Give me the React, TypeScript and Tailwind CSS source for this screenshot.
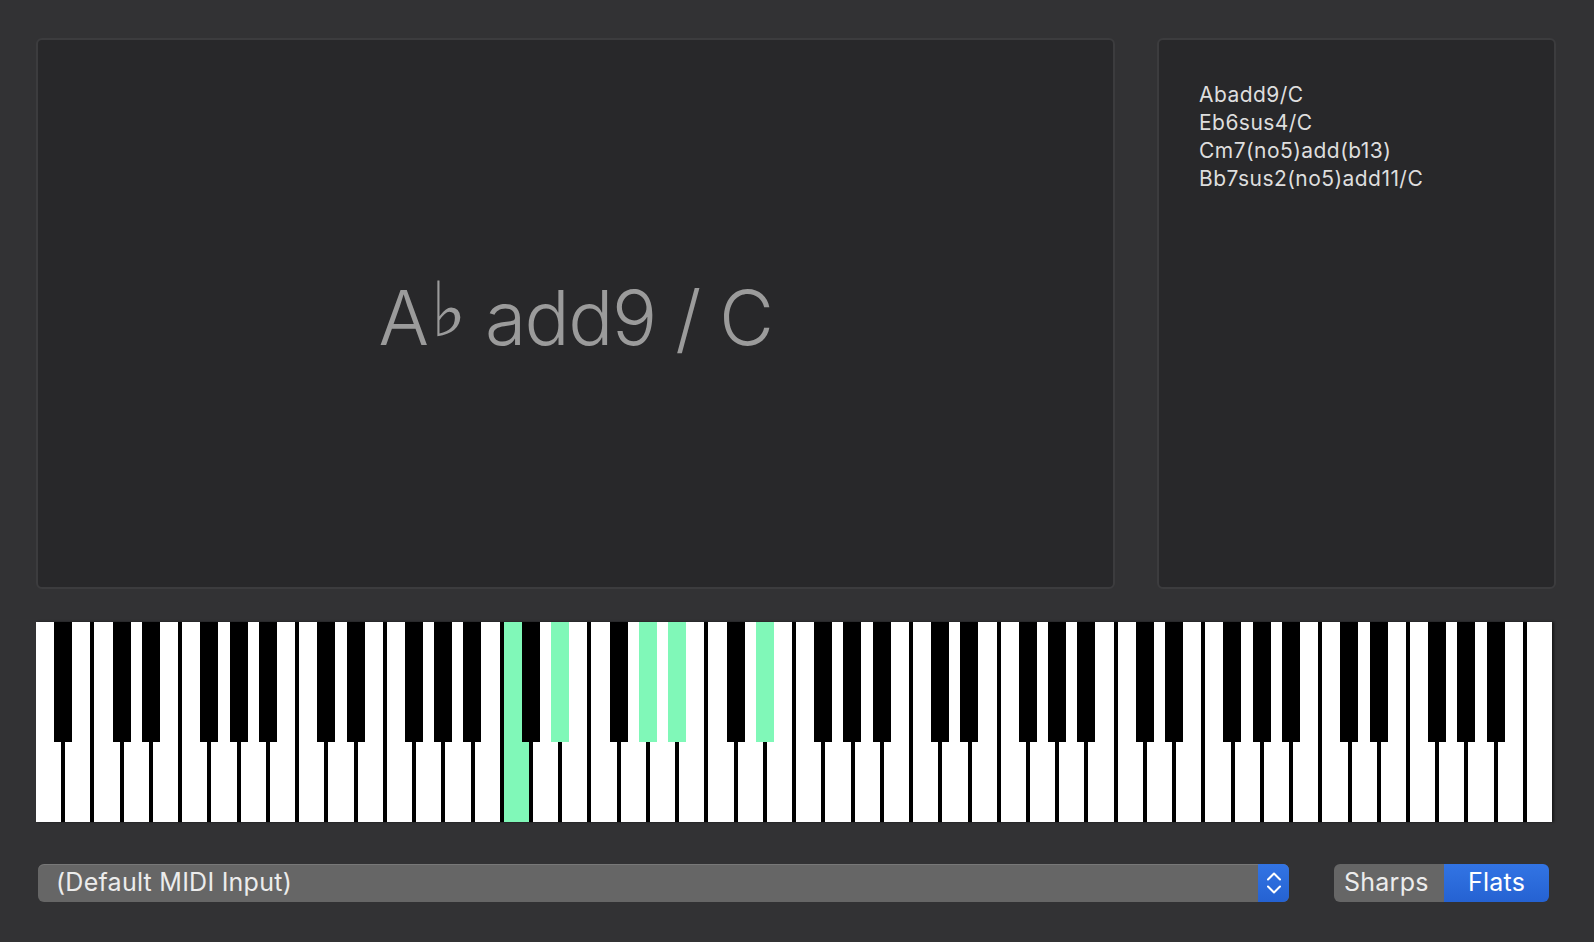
import React from 'react'

const PITCH = 1520 / 52
const BLACK_PCS = [1, 3, 6, 8, 10]
// Ab add9 / C  ->  C3 Eb3 Ab3 Bb3 Eb4
const ACTIVE = [48, 51, 56, 58, 63]

const candidates = ['Abadd9/C', 'Eb6sus4/C', 'Cm7(no5)add(b13)', 'Bb7sus2(no5)add11/C']

function buildKeys() {
  const whites: { midi: number; on: boolean }[] = []
  const blacks: { midi: number; on: boolean; w: number }[] = []
  for (let midi = 21; midi <= 108; midi++) {
    const on = ACTIVE.includes(midi)
    if (BLACK_PCS.includes(midi % 12)) blacks.push({ midi, on, w: whites.length })
    else whites.push({ midi, on })
  }
  return { whites, blacks }
}

function Piano() {
  const { whites, blacks } = buildKeys()
  return (
    <div className="relative flex h-[200px] w-[1516px] gap-[4px] bg-black shadow-[2px_0_2px_rgba(0,0,0,0.5)]">
      {whites.map(k => (
        <div key={k.midi} className={k.on ? 'flex-1 bg-[#80f8b8]' : 'flex-1 bg-white'} />
      ))}
      {blacks.map(k => (
        <div
          key={k.midi}
          className={k.on ? 'absolute top-0 h-[120px] w-[18px] bg-[#80f8b8]' : 'absolute top-0 h-[120px] w-[18px] bg-black'}
          style={{ left: k.w * PITCH - 11 }}
        />
      ))}
    </div>
  )
}

function Stepper() {
  return (
    <svg width="16" height="24" viewBox="0 0 16 24" fill="none" stroke="white" strokeWidth="2" strokeLinecap="round" strokeLinejoin="round">
      <path d="M2 8.5 L8 2.5 L14 8.5" />
      <path d="M2 15.5 L8 21.5 L14 15.5" />
    </svg>
  )
}

export default function App() {
  return (
    <div className="h-[942px] w-full overflow-hidden bg-[#323234] pl-[36px] pr-[38px] pt-[38px] font-['Inter',sans-serif]">
      <div className="flex h-[551px] gap-[42px]">
        <div className="flex w-[1079px] items-center justify-center rounded-[6px] border-2 border-[#3c3c3e] bg-[#28282a]">
          <div className="flex items-baseline pt-[10px] text-[75px] font-light leading-none tracking-[-1.5px] text-[#9b9b9b]">
            <span>A</span>
            <span className="relative -top-[9px] ml-[3px] mr-[20px] font-['DejaVu_Sans',sans-serif] text-[76px] font-normal leading-none">♭</span>
            <span>add9 / C</span>
          </div>
        </div>
        <div className="flex-1 rounded-[6px] border-2 border-[#3c3c3e] bg-[#28282a] pl-[40px] pt-[41px] text-[21px] leading-[28px] tracking-[0.45px] text-[#dedede]">
          {candidates.map(c => (
            <div key={c}>{c}</div>
          ))}
        </div>
      </div>

      <div className="mt-[33px]">
        <Piano />
      </div>

      <div className="mt-[42px] flex items-center pl-[2px] pr-[7px] text-[25px] tracking-[0.25px]">
        <div className="flex h-[38px] w-[1251px] overflow-hidden rounded-[6px] bg-[#666666] shadow-[inset_0_1px_0_rgba(255,255,255,0.12)]">
          <div className="flex flex-1 items-center pl-[18px] text-[#ececec]">(Default MIDI Input)</div>
          <div className="flex w-[31px] items-center justify-center bg-linear-to-b from-[#3274e4] to-[#2562d2]">
            <Stepper />
          </div>
        </div>
        <div className="ml-auto flex h-[38px] w-[215px] overflow-hidden rounded-[6px] text-[#ececec]">
          <div className="flex w-[110px] items-center bg-[#666666] pl-[10px]">Sharps</div>
          <div className="flex flex-1 items-center justify-center bg-linear-to-b from-[#3274e4] to-[#2562d2] text-white">Flats</div>
        </div>
      </div>
    </div>
  )
}
